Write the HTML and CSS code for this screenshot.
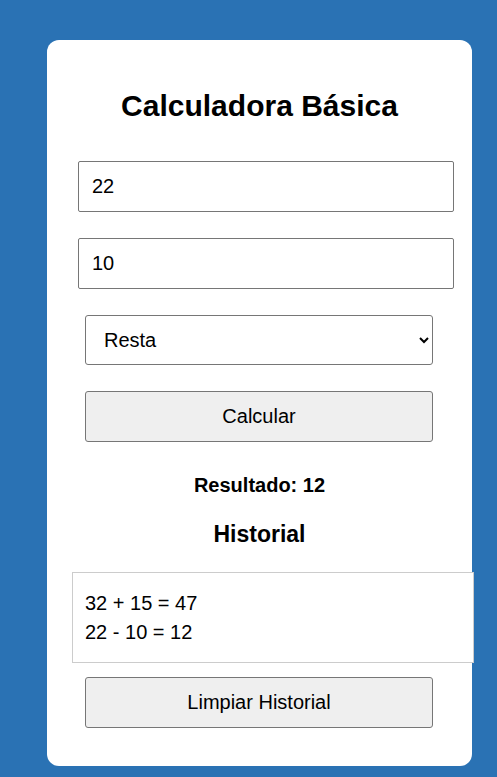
FILE: index.html
```html
<!DOCTYPE html>
<html lang="es">
<head>
<meta charset="utf-8">
<title>Calculadora Básica</title>
<link rel="stylesheet" href="styles.css">
</head>
<body>
<div class="card">
  <h2 class="title">Calculadora Básica</h2>
  <input class="field" type="number" value="22">
  <input class="field field-second" type="number" value="10">
  <select class="op">
    <option>Suma</option>
    <option selected>Resta</option>
    <option>Multiplicación</option>
    <option>División</option>
  </select>
  <button class="btn btn-calc" type="button">Calcular</button>
  <p class="result">Resultado: 12</p>
  <h3 class="hist-title">Historial</h3>
  <div class="history">
    <div class="entry">32 + 15 = 47</div>
    <div class="entry">22 - 10 = 12</div>
  </div>
  <button class="btn btn-clear" type="button">Limpiar Historial</button>
</div>
</body>
</html>
```
FILE: styles.css
```css
html, body {
  margin: 0;
  padding: 0;
}
body {
  background: #2a72b4;
  font-family: "Liberation Sans", Arial, sans-serif;
  font-size: 20px;
  color: #000;
  min-height: 777px;
  overflow: hidden;
}
.card {
  box-sizing: border-box;
  width: 425px;
  margin: 40px 0 0 47px;
  padding: 25px 25px 38px;
  background: #fff;
  border-radius: 12px;
}
.title {
  margin: 24px 0 38px;
  font-size: 30px;
  line-height: 34px;
  font-weight: bold;
  text-align: center;
}
.field {
  display: block;
  box-sizing: border-box;
  width: 376px;
  height: 51px;
  margin: 0 0 0 6px;
  padding: 0 13px;
  border: 1px solid #767676;
  border-radius: 2px;
  font-family: "Liberation Sans", Arial, sans-serif;
  font-size: 20px;
  color: #000;
  background: #fff;
  -moz-appearance: textfield;
}
.field::-webkit-outer-spin-button,
.field::-webkit-inner-spin-button {
  -webkit-appearance: none;
  margin: 0;
}
.field-second {
  margin-top: 26px;
}
.op {
  display: block;
  box-sizing: border-box;
  width: 348px;
  height: 50px;
  margin: 26px 0 0 13px;
  padding: 0 6px 0 14px;
  border: 1px solid #767676;
  border-radius: 3px;
  background-color: #fff;
  font-family: "Liberation Sans", Arial, sans-serif;
  font-size: 20px;
  color: #000;
}
.btn {
  display: block;
  box-sizing: border-box;
  width: 348px;
  height: 51px;
  margin-left: 13px;
  padding: 0;
  border: 1px solid #767676;
  border-radius: 3px;
  background: #efefef;
  font-family: "Liberation Sans", Arial, sans-serif;
  font-size: 20px;
  color: #000;
}
.btn-calc {
  margin-top: 26px;
}
.result {
  margin: 32px 0 0;
  font-weight: bold;
  font-size: 20px;
  line-height: 23px;
  text-align: center;
}
.hist-title {
  margin: 24px 0 0;
  font-size: 23px;
  line-height: 27px;
  font-weight: bold;
  text-align: center;
}
.history {
  box-sizing: border-box;
  width: 402px;
  height: 91px;
  margin-top: 24px;
  padding: 16px 12px 15px;
  border: 1px solid #cccccc;
  background: #fff;
}
.entry {
  line-height: 29px;
  font-size: 20px;
}
.btn-clear {
  margin-top: 14px;
}
```
